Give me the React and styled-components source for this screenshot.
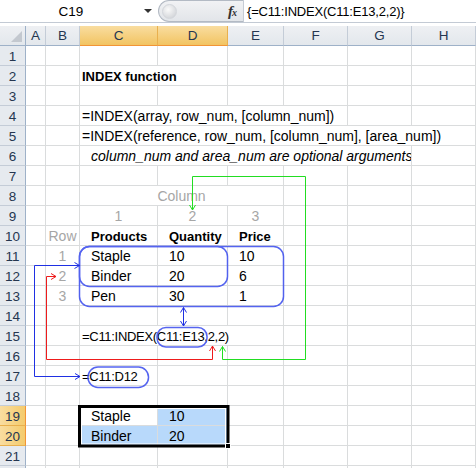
import React from 'react'
import styled, { createGlobalStyle } from 'styled-components'

const GlobalStyle = createGlobalStyle`
  html, body {
    margin: 0;
    padding: 0;
    background: #fff;
  }
`

const COLS = ['A', 'B', 'C', 'D', 'E', 'F', 'G', 'H']
const ROW_COUNT = 22
const LAST_LABELLED = 21
const HEAD_ROWS = [19, 20]
const HEAD_COLS = ['C', 'D']

// cells by row, col letter -> content
const cells = {
  2: [{ col: 'C', span: 2, text: 'INDEX function', bold: true }],
  4: [{ col: 'C', span: 4, text: '=INDEX(array, row_num, [column_num])' }],
  5: [{ col: 'C', span: 6, text: '=INDEX(reference, row_num, [column_num], [area_num])' }],
  6: [{ col: 'C', span: 5, text: 'column_num and area_num are optional arguments', italic: true, indent: true }],
  8: [{ col: 'C', span: 3, text: 'Column', muted: true, center: true }],
  9: [
    { col: 'C', text: '1', muted: true, center: true },
    { col: 'D', text: '2', muted: true, center: true },
    { col: 'E', text: '3', muted: true, center: true },
  ],
  10: [
    { col: 'B', text: 'Row', muted: true, center: true },
    { col: 'C', text: 'Products', bold: true, indent: true },
    { col: 'D', text: 'Quantity', bold: true, indent: true },
    { col: 'E', text: 'Price', bold: true, indent: true },
  ],
  11: [
    { col: 'B', text: '1', muted: true, center: true },
    { col: 'C', text: 'Staple', indent: true },
    { col: 'D', text: '10', indent: true },
    { col: 'E', text: '10', indent: true },
  ],
  12: [
    { col: 'B', text: '2', muted: true, center: true },
    { col: 'C', text: 'Binder', indent: true },
    { col: 'D', text: '20', indent: true },
    { col: 'E', text: '6', indent: true },
  ],
  13: [
    { col: 'B', text: '3', muted: true, center: true },
    { col: 'C', text: 'Pen', indent: true },
    { col: 'D', text: '30', indent: true },
    { col: 'E', text: '1', indent: true },
  ],
  15: [{ col: 'C', span: 3, text: '=C11:INDEX(C11:E13,2,2)', formula: true }],
  17: [{ col: 'C', text: '=C11:D12', formula: true }],
  19: [
    { col: 'C', text: 'Staple', indent: true },
    { col: 'D', text: '10', indent: true, selected: true },
  ],
  20: [
    { col: 'C', text: 'Binder', indent: true, selected: true },
    { col: 'D', text: '20', indent: true, selected: true },
  ],
}

const Page = styled.div`
  position: relative;
  width: 476px;
  height: 468px;
  overflow: hidden;
  background: #fff;
  font-family: "Liberation Sans", Arial, sans-serif;
  font-size: 14px;
  color: #000;
`

const FormulaBar = styled.div`
  display: flex;
  height: 23px;
  box-sizing: border-box;
  border-bottom: 1px solid #c3cad4;
`

const NameBox = styled.div`
  width: 158px;
  display: flex;
  align-items: center;
  background: #fff;
  font-size: 13.5px;
`

const NameText = styled.span`
  flex: 1;
  text-align: center;
  padding-left: 4px;
`

const Caret = styled.span`
  width: 20px;
  display: flex;
  justify-content: center;
  &::before {
    content: '';
    border-left: 4px solid transparent;
    border-right: 4px solid transparent;
    border-top: 4px solid #333;
  }
`

const Splitter = styled.div`
  width: 85px;
  box-sizing: border-box;
  display: flex;
  align-items: center;
  justify-content: space-between;
  padding: 0 7px 0 3px;
  background: linear-gradient(#f1f2f4, #e2e5e9);
  border: 1px solid #b3bac4;
  border-right: none;
  border-radius: 11px 0 0 11px;
`

const Knob = styled.span`
  width: 13px;
  height: 13px;
  border-radius: 50%;
  background: radial-gradient(circle at 40% 35%, #fafafa, #c9ccd1);
  border: 1px solid #d3d6db;
`

const Fx = styled.span`
  font-family: "Liberation Serif", serif;
  font-style: italic;
  font-weight: bold;
  font-size: 15px;
  color: #333;
  letter-spacing: -1px;

  small {
    font-size: 10px;
  }
`

const FormulaInput = styled.div`
  flex: 1;
  display: flex;
  align-items: center;
  padding-left: 3px;
  background: #fff;
  border-left: 1px solid #c6ccd5;
  font-size: 13px;
  letter-spacing: -0.2px;
`

const Spacer = styled.div`
  height: 3px;
  background: #fff;
`

const Sheet = styled.div`
  display: grid;
  grid-template-columns: 26px 20px 34px 78px 70px 56px 64px 64px 1fr;
  grid-auto-rows: 20px;
`

const Corner = styled.div`
  position: relative;
  box-sizing: border-box;
  background: linear-gradient(#eef0f3, #e3e7ec);
  border-right: 1px solid #9eb1c8;
  border-bottom: 1px solid #9eb1c8;

  &::after {
    content: '';
    position: absolute;
    right: 3px;
    bottom: 3px;
    width: 11px;
    height: 11px;
    background: #c3c8cf;
    clip-path: polygon(100% 0, 100% 100%, 0 100%);
  }
`

const ColHead = styled.div`
  box-sizing: border-box;
  text-align: center;
  line-height: 19px;
  font-size: 13.5px;
  color: #253650;
  background: ${p => (p.$active ? 'linear-gradient(#f9dda0, #f2c462)' : 'linear-gradient(#eef0f3, #e3e7ec)')};
  border-right: 1px solid ${p => (p.$active ? '#e9b04e' : '#c4ccd7')};
  border-bottom: 1px solid ${p => (p.$active ? '#f29436' : '#9eb1c8')};
`

const RowHead = styled.div`
  box-sizing: border-box;
  text-align: center;
  line-height: 17px;
  padding-top: 2px;
  font-size: 13.5px;
  color: #253650;
  background: ${p => (p.$active ? 'linear-gradient(90deg, #f9dda0, #f4cb6c)' : '#e6eaef')};
  border-right: 1px solid ${p => (p.$active ? '#f29436' : '#9eb1c8')};
  border-bottom: 1px solid ${p => (p.$active ? '#e9b04e' : '#c4ccd7')};
`

const Cell = styled.div`
  grid-column: span ${p => p.$span || 1};
  box-sizing: border-box;
  border-right: 1px solid #dadcdd;
  border-bottom: 1px solid #dadcdd;
  background: ${p => (p.$selected ? '#b8d9fb' : '#fff')};
  padding: 2px 2px 0 ${p => (p.$indent ? 11 : 2)}px;
  line-height: 17px;
  white-space: nowrap;
  overflow: hidden;
  text-align: ${p => (p.$center ? 'center' : 'left')};
  font-size: ${p => (p.$bold || p.$formula ? 13 : 14)}px;
  letter-spacing: ${p => (p.$formula ? '-0.3px' : 'normal')};
  font-weight: ${p => (p.$bold ? 'bold' : 'normal')};
  font-style: ${p => (p.$italic ? 'italic' : 'normal')};
  color: ${p => (p.$muted ? '#a6a6a6' : '#000')};
`

const Overlay = styled.svg`
  position: absolute;
  left: 0;
  top: 0;
  pointer-events: none;
`

const SheetRow = ({ n }) => {
  const spec = cells[n] || []
  const out = [
    <RowHead key="h" $active={HEAD_ROWS.includes(n)}>
      {n <= LAST_LABELLED ? n : ''}
    </RowHead>,
  ]
  let i = 0
  while (i < COLS.length) {
    const c = spec.find(s => s.col === COLS[i])
    if (c) {
      out.push(
        <Cell
          key={COLS[i]}
          $span={c.span}
          $bold={c.bold}
          $italic={c.italic}
          $muted={c.muted}
          $center={c.center}
          $indent={c.indent}
          $selected={c.selected}
          $formula={c.formula}
        >
          {c.text}
        </Cell>
      )
      i += c.span || 1
    } else {
      out.push(<Cell key={COLS[i]} />)
      i++
    }
  }
  return out
}

const Marker = ({ id, color, reverse }) => (
  <marker
    id={id}
    markerWidth="7"
    markerHeight="7"
    refX="5.5"
    refY="3.5"
    orient={reverse ? 'auto-start-reverse' : 'auto'}
    markerUnits="userSpaceOnUse"
  >
    <path d="M0.5,0.5 L5.5,3.5 L0.5,6.5" fill="none" stroke={color} strokeWidth="1" />
  </marker>
)

const BLUE = '#1f30e3'
const RED = '#ee1b1b'
const GREEN = '#22dd22'
const RING = '#4354ef'

const Annotations = () => (
  <Overlay width="476" height="468">
    <defs>
      <Marker id="mb" color={BLUE} reverse />
      <Marker id="mr" color={RED} />
      <Marker id="mg" color={GREEN} />
    </defs>

    <g fill="none" stroke={RING} strokeWidth="1.5" opacity="0.9">
      <rect x="79.5" y="246.5" width="204" height="60" rx="10" />
      <rect x="79.5" y="246.5" width="148" height="40" rx="10" />
      <rect x="157" y="327.5" width="50" height="19.5" rx="9" />
      <rect x="88" y="367" width="60.5" height="20.5" rx="10" />
    </g>

    <g fill="none" strokeWidth="1">
      <path d="M34.5,265.5 H79.5" stroke={BLUE} markerEnd="url(#mb)" />
      <path d="M34.5,265.5 V376.5 H80" stroke={BLUE} markerEnd="url(#mb)" />
      <path d="M183.5,307.5 V326" stroke={BLUE} markerStart="url(#mb)" markerEnd="url(#mb)" />

      <path d="M46.5,359.5 V276.5 H56" stroke={RED} markerEnd="url(#mr)" />
      <path d="M46.5,359.5 H212.5 V346" stroke={RED} markerEnd="url(#mr)" />

      <path d="M305.5,176.5 H192.5 V210" stroke={GREEN} markerEnd="url(#mg)" />
      <path d="M305.5,176.5 V359.5 H222.5 V346.5" stroke={GREEN} markerEnd="url(#mg)" />
    </g>

    {/* range selection C19:D20 */}
    <rect x="81.5" y="408.5" width="144" height="35.5" fill="none" stroke="#fff" strokeWidth="1" />
    <rect x="79.5" y="406.5" width="148.5" height="39.5" fill="none" stroke="#000" strokeWidth="3" />
    <rect x="225.5" y="443.5" width="5" height="5" fill="#000" stroke="#fff" strokeWidth="1" />
  </Overlay>
)

export default function App() {
  return (
    <Page>
      <GlobalStyle />
      <FormulaBar>
        <NameBox>
          <NameText>C19</NameText>
          <Caret />
        </NameBox>
        <Splitter>
          <Knob />
          <Fx>f<small>x</small></Fx>
        </Splitter>
        <FormulaInput>{'{=C11:INDEX(C11:E13,2,2)}'}</FormulaInput>
      </FormulaBar>
      <Spacer />
      <Sheet>
        <Corner />
        {COLS.map(c => (
          <ColHead key={c} $active={HEAD_COLS.includes(c)}>{c}</ColHead>
        ))}
        {Array.from({ length: ROW_COUNT }, (_, i) => (
          <SheetRow key={i + 1} n={i + 1} />
        ))}
      </Sheet>
      <Annotations />
    </Page>
  )
}
